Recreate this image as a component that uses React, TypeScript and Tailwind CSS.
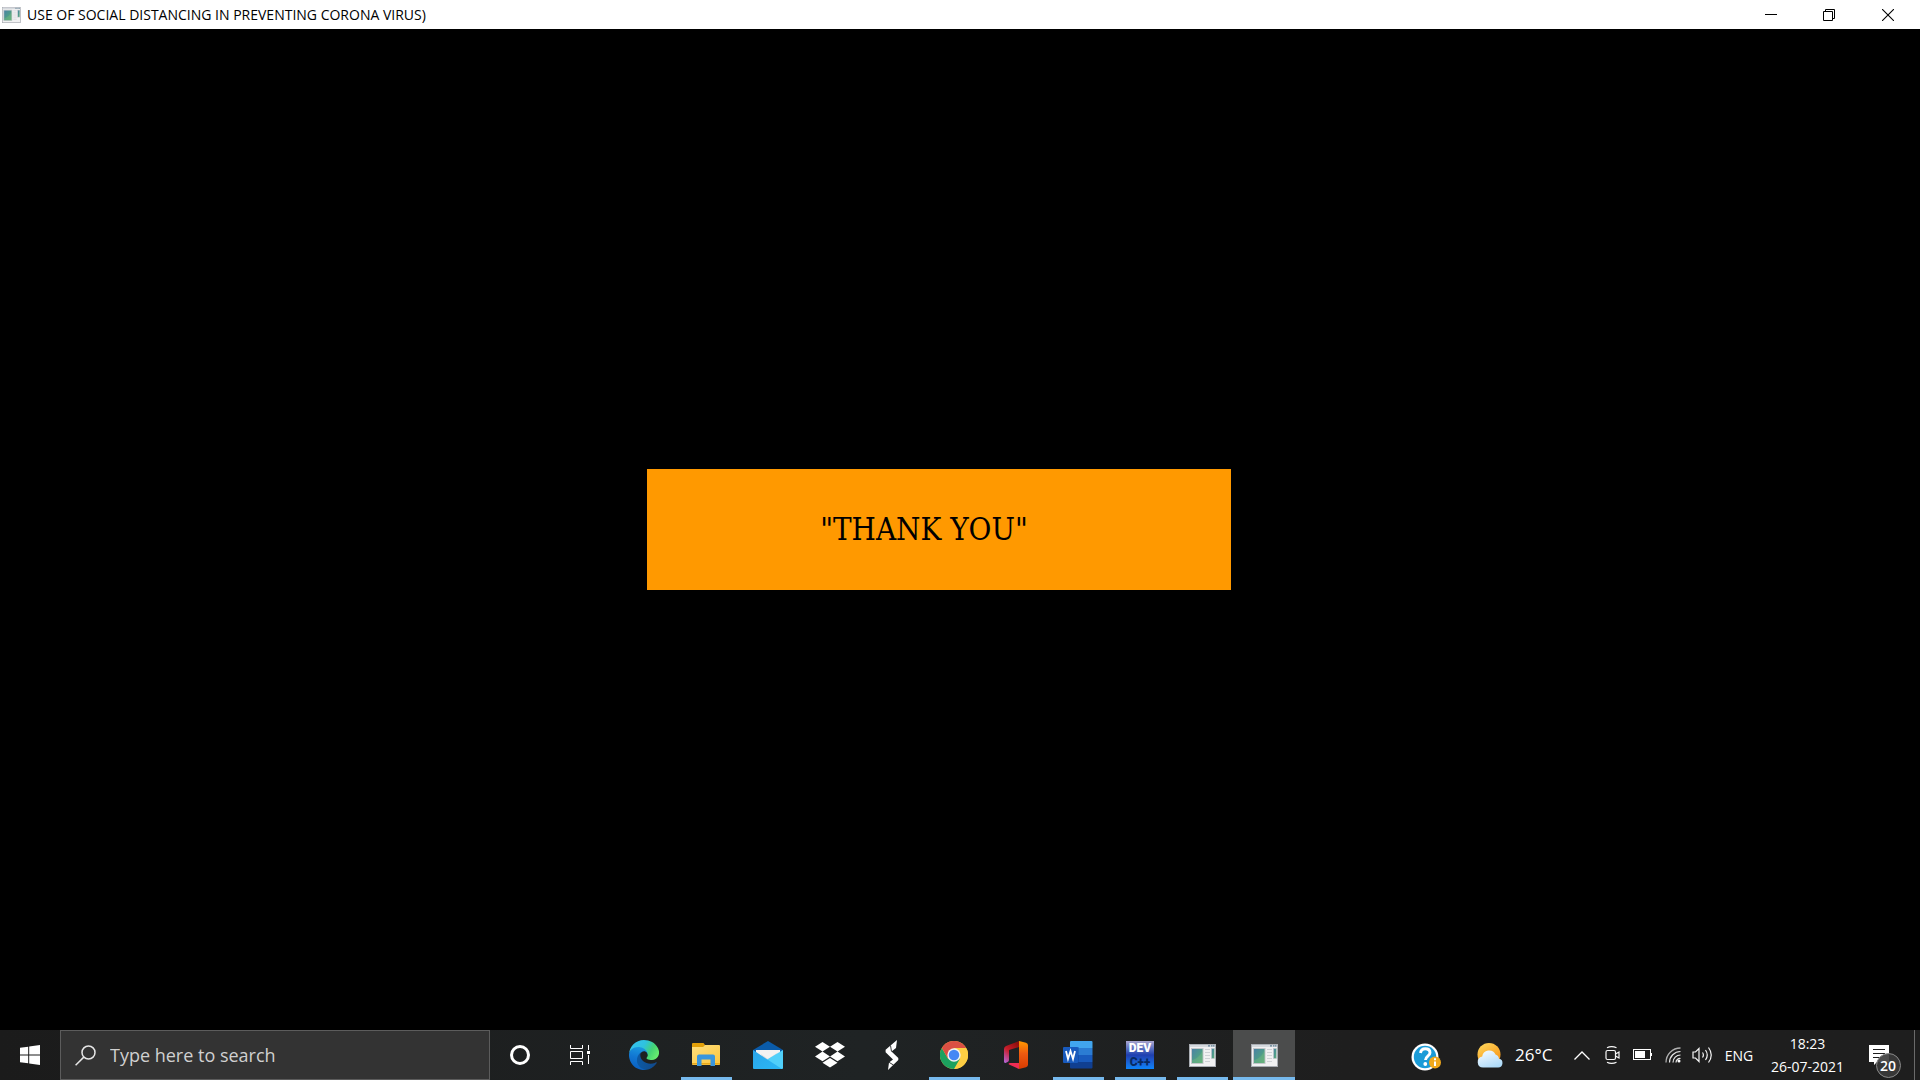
import type { ReactNode } from "react";

function AppWindowIcon({ id, className }: { id: string; className: string }) {
  return (
    <svg viewBox="0 0 27 23" className={className} aria-hidden="true">
      <defs>
        <linearGradient id={id} x1="0" y1="0" x2="1" y2="1">
          <stop offset="0" stopColor="#4a7fa8" />
          <stop offset="0.5" stopColor="#4d9a8c" />
          <stop offset="1" stopColor="#62b07a" />
        </linearGradient>
      </defs>
      <rect x="0.5" y="0.5" width="26" height="22" fill="#f1f1f2" stroke="#a9adb3" />
      <rect x="1" y="1" width="25" height="2" fill="#d5d9de" />
      <path d="M19 1.8h2M22 1.8h1.5M24 1.8h1.5" stroke="#5f7f92" strokeWidth="1.2" />
      <rect x="2.5" y="4.5" width="11.5" height="15" fill={`url(#${id})`} stroke="#c3c6ca" />
      <path d="M3 16C8 15 12 11 13.5 6v13H3z" fill="#7cc07a" opacity="0.35" />
      <path d="M16 5.5h5M16 8.5h5M16 11.5h5M16 14.5h5M16 17.5h5" stroke="#cfd2d6" />
      <rect x="22.5" y="4.5" width="3" height="10" fill={`url(#${id})`} stroke="#c3c6ca" strokeWidth="0.6" />
    </svg>
  );
}

function WindowsIcon() {
  return (
    <svg viewBox="0 0 20 20" className="size-5" fill="#fff" aria-hidden="true">
      <path d="M0 2.8 8.2 1.7v7.8H0zM9.2 1.5 20 0v9.5H9.2zM0 10.5h8.2v7.8L0 17.2zM9.2 10.5H20V20L9.2 18.5z" />
    </svg>
  );
}

function SearchIcon() {
  return (
    <svg viewBox="0 0 21 21" className="size-[21px] shrink-0" fill="none" stroke="#e6e6e6" strokeWidth="1.5" aria-hidden="true">
      <circle cx="13.5" cy="7.5" r="6.5" />
      <path d="M8.8 12.1.6 20.2" />
    </svg>
  );
}

function TaskViewIcon() {
  return (
    <svg viewBox="0 0 20 20" className="size-5" fill="none" stroke="#fff" aria-hidden="true">
      <path d="M.5 0v3.5h12V0M.5 20v-3.5h12V20M.5 6.5h12v7H.5zM18.5 0v5M18.5 10v9" />
      <rect x="17" y="6" width="3" height="3" fill="#fff" stroke="none" />
    </svg>
  );
}

function EdgeIcon() {
  return (
    <svg viewBox="0 0 256 256" className="size-[30px]" aria-hidden="true">
      <defs>
        <linearGradient id="edgeNavy" x1="0.1" y1="0.5" x2="0.9" y2="0.5">
          <stop offset="0" stopColor="#0c59a4" />
          <stop offset="1" stopColor="#114a8b" />
        </linearGradient>
        <linearGradient id="edgeBlue" x1="0.6" y1="0" x2="0.4" y2="1">
          <stop offset="0" stopColor="#1b9de2" />
          <stop offset="0.5" stopColor="#1176d2" />
          <stop offset="1" stopColor="#0a5fc0" />
        </linearGradient>
        <linearGradient id="edgeGreen" x1="0" y1="0.2" x2="1" y2="0.6">
          <stop offset="0" stopColor="#35c1f1" />
          <stop offset="0.45" stopColor="#2fc2df" />
          <stop offset="0.75" stopColor="#43d374" />
          <stop offset="1" stopColor="#66eb6e" />
        </linearGradient>
      </defs>
      <path d="M231 190.5c-3.400 1.800-6.900 3.400-10.500 4.700-11.500 4.300-23.600 6.500-35.900 6.500-47.300 0-88.500-32.500-88.500-74.300.1-11.400 6.400-21.900 16.400-27.300-42.800 1.800-53.800 46.400-53.800 72.500 0 73.900 68.100 81.400 82.800 81.400 7.900 0 19.800-2.300 27-4.600l1.300-.4c27.600-9.500 51-28.100 66.600-52.800 1.200-1.900.6-4.300-1.200-5.500-1.300-.8-2.900-.9-4.200-.2z" fill="url(#edgeNavy)" />
      <path d="M105.700 241.400c-8.900-5.500-16.600-12.800-22.700-21.300-26.300-36-18.400-86.500 17.600-112.800 3.800-2.700 7.700-5.200 11.900-7.200 3.100-1.500 8.400-4.100 15.500-4 10.100.1 19.600 4.900 25.700 13 4 5.400 6.300 11.900 6.400 18.700 0-.2 24.500-79.600-80-79.600C36.200 48.200.1 89.900.1 126.500c-.2 19.300 4 38.500 12.100 56 27.600 58.800 94.800 87.600 156.400 67.100-21.100 6.600-44.100 3.700-62.900-8.200z" fill="url(#edgeBlue)" />
      <path d="M152.300 148.900c-.9 1-3.300 2.500-3.300 5.700 0 2.600 1.700 5.200 4.800 7.300 14.400 10.100 41.700 8.700 41.800 8.700 10.700 0 21.300-2.900 30.500-8.300 18.800-11 30.400-31.100 30.400-52.900.3-22.400-8-37.300-11.300-43.900C223.900 23.900 177.700.1 127.500.1 56.800-.1 1.100 55.900.1 126.400.6 90.100 36.700 60.700 80.100 60.700c3.500 0 23.500.3 42 10.100 16.300 8.600 24.900 18.900 30.800 29.200 6.200 10.700 7.300 24.100 7.300 29.500 0 5.300-2.700 13.300-7.900 19.400z" fill="url(#edgeGreen)" />
    </svg>
  );
}

function ExplorerIcon() {
  return (
    <svg viewBox="0 0 28 24" className="h-6 w-7" aria-hidden="true">
      <defs>
        <linearGradient id="folder" x1="0" y1="0" x2="1" y2="1">
          <stop offset="0" stopColor="#ffdf7d" />
          <stop offset="1" stopColor="#fcc63e" />
        </linearGradient>
      </defs>
      <path d="M1 0h10.500l1.700 2.200L11.500 4H0V1a1 1 0 0 1 1-1z" fill="#e3a008" />
      <path d="M0 4h11l2-2h14a1 1 0 0 1 1 1v18a1 1 0 0 1-1 1H1a1 1 0 0 1-1-1z" fill="url(#folder)" />
      <path d="M0 20h28v1.500H0z" fill="#e8a91c" />
      <path d="M5 23V13.500a2 2 0 0 1 2-2h14a2 2 0 0 1 2 2V23h-4.500v-6.500h-9V23z" fill="#3a96dd" />
    </svg>
  );
}

function MailIcon() {
  return (
    <svg viewBox="0 0 30 28" className="h-7 w-[30px]" aria-hidden="true">
      <defs>
        <linearGradient id="mailBody" x1="0" y1="0" x2="1" y2="1">
          <stop offset="0" stopColor="#2aa5ea" />
          <stop offset="1" stopColor="#2bb8f5" />
        </linearGradient>
      </defs>
      <path d="M15 0 30 9v5H0V9z" fill="#0a5ba9" />
      <path d="M3 9h24v6l-12 5-12-5z" fill="#f2f2f2" />
      <path d="m8 13 7 5 9-6-2 6H10z" fill="#dcdcdc" />
      <path d="M30 9v18a1 1 0 0 1-1 1H1L15 18z" fill="#50d0fa" />
      <path d="M0 9v18a1 1 0 0 0 1 1h28z" fill="url(#mailBody)" />
    </svg>
  );
}

function DropboxIcon() {
  return (
    <svg viewBox="0 0 30 26" className="h-[26px] w-[30px]" fill="#fff" aria-hidden="true">
      <path d="M7.500 0 15 4.800 7.500 9.600 0 4.800zM22.500 0 30 4.800l-7.500 4.800L15 4.800zM0 14.400l7.500-4.800 7.500 4.800-7.500 4.800zM22.500 9.600l7.500 4.800-7.500 4.800-7.500-4.800zM7.500 20.800 15 16l7.500 4.800-7.500 4.800z" />
    </svg>
  );
}

function BoltIcon() {
  return (
    <svg viewBox="0 0 14 30" className="h-[30px] w-3.5" aria-hidden="true">
      <path d="M12 0 11 8 6.500 11.500 13.300 18v2L3 30l1-7.500 4-3L.6 12.200v-2.500z" fill="#fff" />
      <path d="m5.500 5.500 1 6M3.500 22l5 3" stroke="#1f2324" strokeWidth="0.9" />
    </svg>
  );
}

function ChromeIcon() {
  return (
    <svg viewBox="0 0 48 48" className="size-7" aria-hidden="true">
      <circle cx="24" cy="24" r="24" fill="#fdce43" />
      <path d="M24 12h20.800A24 24 0 0 1 24 48l10.400-18z" fill="#fdce43" />
      <path d="M3.200 12A24 24 0 0 0 24 48l10.400-18L24 24 13.600 30z" fill="#1ca15f" />
      <path d="M3.200 12A24 24 0 0 1 44.800 12H24L13.600 30z" fill="#db4f43" />
      <circle cx="24" cy="24" r="11.500" fill="#f1f1f1" />
      <circle cx="24" cy="24" r="9" fill="#4688f4" />
    </svg>
  );
}

function OfficeIcon() {
  return (
    <svg viewBox="0 0 24 28" className="h-7 w-6" aria-hidden="true">
      <defs>
        <linearGradient id="officeRight" x1="0" y1="0" x2="0" y2="1">
          <stop offset="0" stopColor="#ff9a00" />
          <stop offset="0.45" stopColor="#ee5a10" />
          <stop offset="1" stopColor="#d83b01" />
        </linearGradient>
        <linearGradient id="officeLeft" x1="0.7" y1="0" x2="0.1" y2="1">
          <stop offset="0" stopColor="#8f0f0d" />
          <stop offset="0.5" stopColor="#c81e2b" />
          <stop offset="1" stopColor="#b565d6" />
        </linearGradient>
      </defs>
      <path d="M15 0 2 5Q0 6 0 8v12.500q0 2 2 1.200l2-1q1-.7 1-2V9l10-3z" fill="url(#officeLeft)" />
      <path d="M5 23.500q-1-1.500 1-1.500h9v6z" fill="#ee2d54" />
      <path d="m15 0 7 1.800q2 .6 2 2.500v19.500q0 1.800-2 2.400L15 28z" fill="url(#officeRight)" />
    </svg>
  );
}

function WordIcon() {
  return (
    <svg viewBox="0 0 30 28" className="h-7 w-[30px]" aria-hidden="true">
      <path d="M8 0h20.500a1 1 0 0 1 1 1v6H7V1a1 1 0 0 1 1-1z" fill="#41a5ee" />
      <path d="M7 7h22.500v7H7z" fill="#2b7cd3" />
      <path d="M7 14h22.500v7H7z" fill="#185abd" />
      <path d="M7 21h22.500v5.500a1 1 0 0 1-1 1H8a1 1 0 0 1-1-1z" fill="#103f91" />
      <path d="M7 6h9v17H7z" fill="#103f91" opacity="0.35" />
      <rect y="6" width="15" height="16" rx="1" fill="#185abd" />
      <path d="m3 10 2 8 2.500-8 2.500 8 2-8" fill="none" stroke="#fff" strokeWidth="1.8" />
    </svg>
  );
}

function DevCppIcon() {
  return (
    <span
      className="flex size-7 flex-col items-center bg-linear-to-b from-[#aaa6cf] via-[#1f3fb0] to-[#0a84fa] font-['Roboto',sans-serif] text-[12px] leading-[14px] font-black"
      aria-hidden="true"
    >
      <span className="text-white">DEV</span>
      <span className="text-[#082a63]">C++</span>
    </span>
  );
}

function HelpIcon() {
  return (
    <svg viewBox="0 0 30 28" className="h-7 w-[30px]" aria-hidden="true">
      <circle cx="14" cy="14" r="13.500" fill="#fff" />
      <circle cx="14" cy="14" r="11.200" fill="#1a9bd7" />
      <path d="M9.500 10c.3-3 2.300-4.300 4.800-4.300 2.700 0 4.700 1.500 4.700 4 0 3.500-4.500 3.500-4.500 7.300" fill="none" stroke="#fff" strokeWidth="2.900" />
      <circle cx="14.300" cy="21" r="1.900" fill="#fff" />
      <circle cx="24" cy="19.500" r="6" fill="#f0a81c" />
      <path d="M24 18.500v4.500M24 15.300v1.900" stroke="#fff" strokeWidth="2" />
    </svg>
  );
}

function WeatherIcon() {
  return (
    <svg viewBox="0 0 26 25" className="h-[25px] w-[26px] shrink-0" aria-hidden="true">
      <defs>
        <linearGradient id="sun" x1="0.2" y1="0" x2="0.8" y2="1">
          <stop offset="0" stopColor="#ffd55a" />
          <stop offset="1" stopColor="#f58a0b" />
        </linearGradient>
        <linearGradient id="cloud" x1="0.3" y1="0" x2="0.8" y2="1">
          <stop offset="0" stopColor="#f2f9ff" />
          <stop offset="1" stopColor="#a9d8f8" />
        </linearGradient>
      </defs>
      <circle cx="12" cy="11.500" r="11.500" fill="url(#sun)" />
      <path d="M6 24.500a5.500 5.500 0 0 1-.8-10.900 7 7 0 0 1 13.300-2.100 5.200 5.200 0 0 1 3.500 4.300 4.400 4.400 0 0 1-1 8.700z" fill="url(#cloud)" />
    </svg>
  );
}

function CameraIcon() {
  return (
    <svg viewBox="0 0 16 18" className="h-[18px] w-4" fill="none" stroke="#f5f5f5" strokeWidth="1.200" aria-hidden="true">
      <rect x="1" y="4.500" width="9.500" height="9" rx="1.500" />
      <path d="m10.500 8 3.500-2v6l-3.500-2M2 1.800Q6.500-.6 11.500 1.800M2 16.200q4.500 2.400 9.500 0" />
    </svg>
  );
}

function BatteryIcon() {
  return (
    <svg viewBox="0 0 19 12" className="h-3 w-[19px]" aria-hidden="true">
      <rect x="0.500" y="0.500" width="17" height="10" fill="none" stroke="#fff" />
      <path d="M2 2h10v7H2zM18 4h1v3h-1z" fill="#fff" />
    </svg>
  );
}

function WifiIcon() {
  return (
    <svg viewBox="0 0 16 16" className="size-4" fill="none" aria-hidden="true">
      <path d="M1 15.500A14.500 14.500 0 0 1 15.500 1" stroke="#b0b0b0" strokeWidth="1.300" />
      <path d="M4.500 15.500a11 11 0 0 1 11-11M8 15.500A7.500 7.500 0 0 1 15.500 8M11 15.500a4 4 0 0 1 4.500-4" stroke="#e8e8e8" strokeWidth="1.200" />
      <circle cx="14" cy="14" r="1.500" fill="#fff" />
    </svg>
  );
}

function VolumeIcon() {
  return (
    <svg viewBox="0 0 21 18" className="h-[18px] w-[21px]" fill="none" stroke="#f5f5f5" strokeWidth="1.200" aria-hidden="true">
      <path d="M1 6h2.500L7 2.500v13L3.500 12H1z" />
      <path d="M10.500 6.500q1.800 2.500 0 5M13.500 4q3.500 5 0 10M16.500 1.500q5.500 7.500 0 15" />
    </svg>
  );
}

function NotificationIcon() {
  return (
    <svg viewBox="0 0 20 20" className="size-5" aria-hidden="true">
      <path d="M0 0h20v17H8l-3 3v-3H0z" fill="#fff" />
      <path d="M4 4.500h12M4 8.500h12M4 12.500h8" stroke="#1e1e1e" strokeWidth="1.200" />
    </svg>
  );
}

type TaskApp = { label: string; icon: ReactNode; running?: boolean; active?: boolean };

const apps: TaskApp[] = [
  { label: "Microsoft Edge", icon: <EdgeIcon /> },
  { label: "File Explorer", icon: <ExplorerIcon />, running: true },
  { label: "Mail", icon: <MailIcon /> },
  { label: "Dropbox", icon: <DropboxIcon /> },
  { label: "Quick launcher", icon: <BoltIcon /> },
  { label: "Google Chrome", icon: <ChromeIcon />, running: true },
  { label: "Office", icon: <OfficeIcon /> },
  { label: "Word", icon: <WordIcon />, running: true },
  { label: "Dev-C++", icon: <DevCppIcon />, running: true },
  { label: "Console", icon: <AppWindowIcon id="console" className="h-[23px] w-[27px]" />, running: true },
  { label: "Graphics window", icon: <AppWindowIcon id="graphics" className="h-[23px] w-[27px]" />, active: true },
];

function TaskButton({ app }: { app: TaskApp }) {
  return (
    <button
      type="button"
      aria-label={app.label}
      className={app.active ? "flex w-[62px] flex-col items-center bg-[#4b4c4c]" : "flex w-[62px] flex-col items-center"}
    >
      <span className="flex h-[47px] items-center justify-center pt-[3px]">{app.icon}</span>
      {app.active && <span className="h-[3px] w-full bg-[#76b9ed]" />}
      {app.running && <span className="h-[3px] w-[51px] bg-[#76b9ed]" />}
    </button>
  );
}

function TrayButton({ label, className, children }: { label: string; className: string; children: ReactNode }) {
  return (
    <button type="button" aria-label={label} className={`flex items-center justify-center ${className}`}>
      {children}
    </button>
  );
}

function TitleBar() {
  return (
    <header className="flex h-[29px] items-center bg-white pr-0.5 text-black">
      <AppWindowIcon id="caption" className="ml-0.5 h-4 w-[19px]" />
      <h1 className="ml-1.5 grow text-[14px] leading-5">USE OF SOCIAL DISTANCING IN PREVENTING CORONA VIRUS)</h1>
      <button type="button" aria-label="Minimize" className="flex h-full w-[58px] items-center justify-center">
        <svg viewBox="0 0 12 12" className="size-3" stroke="#000" aria-hidden="true">
          <path d="M0 5.500h12" />
        </svg>
      </button>
      <button type="button" aria-label="Restore" className="flex h-full w-[58px] items-center justify-center">
        <svg viewBox="0 0 12 12" className="size-3" fill="none" stroke="#000" aria-hidden="true">
          <path d="M.5 2.500h9v9h-9zM2.500 2.500v-2h9v9h-2" />
        </svg>
      </button>
      <button type="button" aria-label="Close" className="flex h-full w-[60px] items-center justify-center">
        <svg viewBox="0 0 12 12" className="size-3" stroke="#000" strokeWidth="1.100" aria-hidden="true">
          <path d="m0 0 12 12M12 0 0 12" />
        </svg>
      </button>
    </header>
  );
}

function Taskbar() {
  return (
    <footer className="flex h-[50px] items-stretch bg-linear-to-r from-[#1b1b1b] via-[#1f2324] via-45% to-[#1e1e1e] to-70% text-white">
      <button type="button" aria-label="Start" className="flex w-[60px] items-center justify-center">
        <WindowsIcon />
      </button>
      <label className="flex w-[430px] items-center border border-[#5c5c5c] bg-[#333333] pl-3.5">
        <SearchIcon />
        <input
          type="text"
          aria-label="Search"
          placeholder="Type here to search"
          className="ml-3.5 min-w-0 grow bg-transparent text-[18px] leading-6 outline-none placeholder:text-[#d0d0d0]"
        />
      </label>
      <button type="button" aria-label="Cortana" className="flex w-[60px] items-center justify-center">
        <span className="size-5 rounded-full border-[3px] border-white" />
      </button>
      <button type="button" aria-label="Task View" className="mr-1 flex w-[59px] items-center justify-center">
        <TaskViewIcon />
      </button>
      <nav aria-label="Applications" className="flex">
        {apps.map((app) => (
          <TaskButton key={app.label} app={app} />
        ))}
      </nav>
      <div className="ml-auto flex text-[14px]">
        <TrayButton label="Help" className="mr-3.5 w-[60px] pt-1">
          <HelpIcon />
        </TrayButton>
        <button type="button" className="flex w-[97px] items-center gap-3 pl-[7px] text-[17px]">
          <WeatherIcon />
          <span>26°C</span>
        </button>
        <TrayButton label="Show hidden icons" className="w-[30px]">
          <svg viewBox="0 0 16 9" className="h-[9px] w-4" fill="none" stroke="#fff" strokeWidth="1.300" aria-hidden="true">
            <path d="m.5 8.500 7.500-7.500 7.500 7.500" />
          </svg>
        </TrayButton>
        <TrayButton label="Meet Now" className="w-[31px]">
          <CameraIcon />
        </TrayButton>
        <TrayButton label="Battery" className="w-[29px]">
          <BatteryIcon />
        </TrayButton>
        <TrayButton label="Network" className="w-[31px]">
          <WifiIcon />
        </TrayButton>
        <TrayButton label="Volume" className="w-7">
          <VolumeIcon />
        </TrayButton>
        <button type="button" className="w-[46px]">ENG</button>
        <button type="button" className="flex w-[91px] flex-col items-center justify-center leading-[23px]">
          <span>18:23</span>
          <span>26-07-2021</span>
        </button>
        <button type="button" aria-label="20 notifications" className="flex w-[61px] items-center justify-center pr-2.5">
          <span className="relative">
            <NotificationIcon />
            <span className="absolute top-2 left-[7px] flex size-[25px] items-center justify-center rounded-full border border-[#8a8a8a] bg-[#3a3a3a]/90 text-[14px] leading-none font-semibold">
              20
            </span>
          </span>
        </button>
        <button type="button" aria-label="Show desktop" className="w-1.5 border-l border-[#6a6a6a]" />
      </div>
    </footer>
  );
}

export default function App() {
  return (
    <div className="flex min-h-screen flex-col bg-black font-['Open_Sans','Noto_Sans',sans-serif]">
      <TitleBar />
      <main className="flex grow items-center justify-center pr-[42px]">
        <div className="flex h-[121px] w-[584px] items-center justify-center bg-[#ff9900] pr-[30px] font-['DejaVu_Serif_Condensed','DejaVu_Serif','Liberation_Serif',serif] text-[31px] text-black">
          "THANK YOU"
        </div>
      </main>
      <Taskbar />
    </div>
  );
}
